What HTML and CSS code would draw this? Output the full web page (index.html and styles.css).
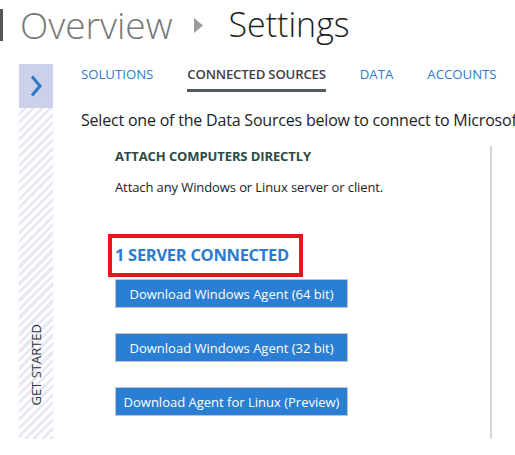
FILE: index.html
```html
<!DOCTYPE html>
<html>
<head>
<meta charset="utf-8">
<link rel="stylesheet" href="styles.css">
</head>
<body>
<div class="page">
  <header class="crumbs">
    <span class="edge"></span>
    <span class="crumb-prev">Overview</span>
    <svg class="crumb-sep" width="9" height="15" viewBox="0 0 9 15"><polygon points="0,0 9,7.5 0,15" fill="#9a9a9a"/></svg>
    <span class="crumb-cur">Settings</span>
  </header>
  <div class="layout">
    <aside class="rail">
      <div class="rail-toggle">
        <svg width="12" height="22" viewBox="0 0 12 22"><polyline points="2,1.5 10,11 2,20.5" fill="none" stroke="#2b78c8" stroke-width="3"/></svg>
      </div>
      <div class="rail-stripes">
        <span class="rail-label">GET STARTED</span>
      </div>
    </aside>
    <main class="main">
      <nav class="tabs">
        <a class="tab">SOLUTIONS</a>
        <a class="tab active">CONNECTED SOURCES</a>
        <a class="tab">DATA</a>
        <a class="tab">ACCOUNTS</a>
      </nav>
      <p class="intro">Select one of the Data Sources below to connect to Microsoft</p>
      <section class="card">
        <h3 class="card-title">ATTACH COMPUTERS DIRECTLY</h3>
        <p class="card-desc">Attach any Windows or Linux server or client.</p>
        <div class="status"><span class="status-text">1 SERVER CONNECTED</span></div>
        <div class="buttons">
          <button class="btn">Download Windows Agent (64 bit)</button>
          <button class="btn">Download Windows Agent (32 bit)</button>
          <button class="btn">Download Agent for Linux (Preview)</button>
        </div>
      </section>
    </main>
  </div>
</div>
</body>
</html>
```
FILE: styles.css
```css
* { box-sizing: border-box; }
html, body { margin: 0; padding: 0; background: #fff; }
body {
  font-family: "Open Sans", "Noto Sans", sans-serif;
  color: #222;
  width: 515px;
  height: 455px;
  overflow: hidden;
}
.crumbs {
  display: flex;
  align-items: center;
  height: 48px;
  white-space: nowrap;
}
.edge {
  width: 3px;
  height: 32px;
  background: #555;
  margin-right: 17px;
  margin-top: 2px;
}
.crumb-prev {
  font-size: 37px;
  font-weight: 300;
  color: #777;
}
.crumb-sep { margin: 2px 25px 0 22px; }
.crumb-cur {
  font-size: 34px;
  font-weight: 300;
  color: #1e1e1e;
}
.layout {
  display: flex;
  padding-top: 16px;
}
.rail {
  margin-left: 19px;
  width: 34px;
  display: flex;
  flex-direction: column;
}
.rail-toggle {
  height: 44px;
  background: #cdd0ea;
  display: flex;
  align-items: center;
  justify-content: center;
}
.rail-stripes {
  height: 331px;
  background: repeating-linear-gradient(135deg, #fff 0 3px, #e9e9f4 3px 6px);
  display: flex;
  align-items: flex-end;
  justify-content: center;
  padding-bottom: 33px;
}
.rail-label {
  writing-mode: vertical-rl;
  transform: rotate(180deg);
  font-size: 13px;
  color: #333;
}
.main {
  margin-left: 28px;
  flex: 1;
  min-width: 0;
}
.tabs {
  display: flex;
  gap: 34px;
  white-space: nowrap;
}
.tab {
  font-size: 13.2px;
  color: #2b7bd0;
  padding: 1px 0 6px;
  border-bottom: 3px solid transparent;
}
.tab.active {
  color: #3d4148;
  font-weight: 600;
  border-bottom-color: #505860;
  letter-spacing: -0.2px;
}
.intro {
  margin: 17px 0 0;
  font-size: 16px;
  white-space: nowrap;
  color: #222;
  letter-spacing: -0.2px;
}
.card {
  margin: 15px 0 0 34px;
  width: 377px;
  height: 293px;
  border-right: 2px solid #d6d6d6;
}
.card-title {
  margin: 0;
  padding-top: 1px;
  font-size: 13px;
  font-weight: 700;
  color: #2a4a48;
  letter-spacing: -0.1px;
}
.card-desc {
  margin: 13px 0 0;
  font-size: 13px;
  color: #222;
  letter-spacing: -0.1px;
}
.status {
  display: flex;
  width: fit-content;
  margin: 38px 0 0 -7px;
  border: 4px solid #e8141e;
  padding: 5px 10px 6px 3px;
  line-height: 24px;
}
.status-text {
  font-size: 16.5px;
  font-weight: 700;
  color: #2b7bd0;
  letter-spacing: -0.3px;
}
.buttons {
  display: flex;
  flex-direction: column;
  gap: 25px;
  margin-top: 2px;
}
.btn {
  width: 233px;
  height: 29px;
  background: #2a7ed3;
  border: 1px solid #c4c4c4;
  color: #fff;
  font-family: "Open Sans", "Noto Sans", sans-serif;
  font-size: 13px;
  padding: 0;
}
```
